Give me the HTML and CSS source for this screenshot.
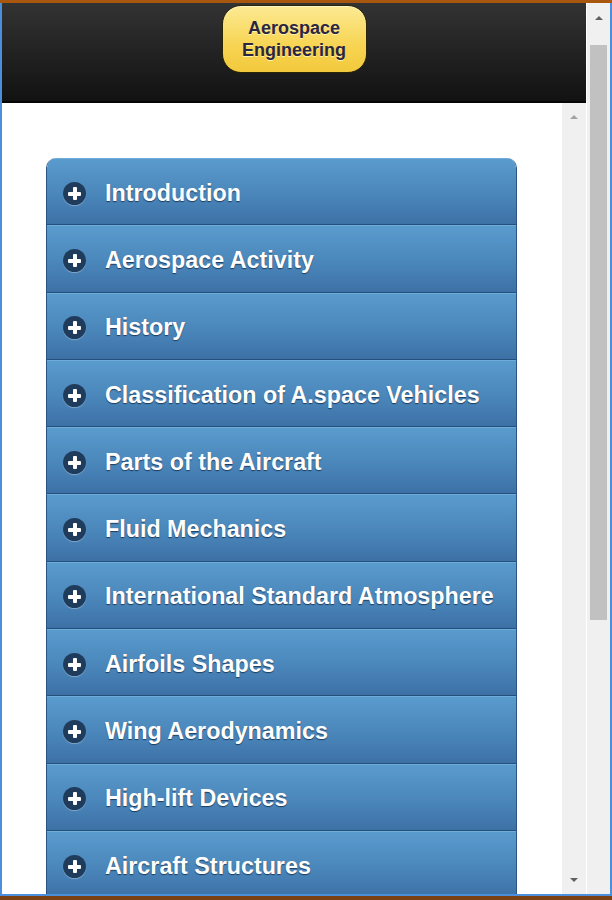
FILE: index.html
```html
<!DOCTYPE html>
<html lang="en">
<head>
    <meta charset="UTF-8">
    <meta name="viewport" content="width=device-width, initial-scale=1.0">
    <title>Aerospace Engineering</title>
    <link rel="stylesheet" href="styles.css">
</head>
<body>
    <div class="window">
        <div class="frame">
            <div class="page">
                <div class="header">
                    <div class="title-button">Aerospace<br>Engineering</div>
                </div>
                <div class="content-row">
                    <div class="content">
                        <ul class="menu">
                            <li class="menu-item"><span class="plus"></span>Introduction</li>
                            <li class="menu-item"><span class="plus"></span>Aerospace Activity</li>
                            <li class="menu-item"><span class="plus"></span>History</li>
                            <li class="menu-item"><span class="plus"></span>Classification of A.space Vehicles</li>
                            <li class="menu-item"><span class="plus"></span>Parts of the Aircraft</li>
                            <li class="menu-item"><span class="plus"></span>Fluid Mechanics</li>
                            <li class="menu-item"><span class="plus"></span>International Standard Atmosphere</li>
                            <li class="menu-item"><span class="plus"></span>Airfoils Shapes</li>
                            <li class="menu-item"><span class="plus"></span>Wing Aerodynamics</li>
                            <li class="menu-item"><span class="plus"></span>High-lift Devices</li>
                            <li class="menu-item"><span class="plus"></span>Aircraft Structures</li>
                        </ul>
                    </div>
                    <div class="scrollbar inner">
                        <span class="arrow up dim"></span>
                        <span class="arrow down"></span>
                    </div>
                </div>
            </div>
            <div class="scrollbar outer">
                <span class="arrow up"></span>
                <div class="thumb"></div>
            </div>
        </div>
    </div>
</body>
</html>
```

FILE: styles.css
```css
body {
    margin: 0;
    padding: 0;
    font-family: "Liberation Sans", Arial, sans-serif;
    background-color: #ffffff;
}

.window {
    width: 612px;
    height: 900px;
    box-sizing: border-box;
    border-top: 3px solid #a9560f;
    border-bottom: 4px solid #7a4214;
    overflow: hidden;
}

.frame {
    height: 100%;
    box-sizing: border-box;
    border-left: 2px solid #4b8fdc;
    border-right: 2px solid #4b8fdc;
    border-bottom: 2px solid #4b8fdc;
    display: flex;
}

.page {
    flex: 1;
    display: flex;
    flex-direction: column;
    min-width: 0;
}

.header {
    height: 100px;
    box-sizing: border-box;
    border-bottom: 2px solid #050505;
    background: linear-gradient(#333333, #121212);
    display: flex;
    justify-content: center;
    align-items: flex-start;
    padding-top: 2px;
}

.title-button {
    width: 145px;
    height: 68px;
    box-sizing: border-box;
    border: 1px solid #2b2406;
    border-radius: 19px;
    background: linear-gradient(#fcea93, #f7d452 60%, #f3c93c);
    box-shadow: inset 0 1px 0 #fff6c8;
    color: #2b2540;
    font-size: 18px;
    font-weight: bold;
    line-height: 22px;
    text-align: center;
    display: flex;
    align-items: center;
    justify-content: center;
    text-shadow: 0 1px 0 #fff3b0;
}

.content-row {
    flex: 1;
    display: flex;
    min-height: 0;
}

.content {
    flex: 1;
    overflow: hidden;
    padding: 55px 0 0 44px;
}

.menu {
    list-style: none;
    margin: 0;
    padding: 0;
    width: 469px;
    border-left: 1px solid #2a5582;
    border-right: 1px solid #2a5582;
    border-radius: 10px 10px 0 0;
    overflow: hidden;
}

.menu-item {
    height: 67.3px;
    box-sizing: border-box;
    display: flex;
    align-items: center;
    padding-left: 16px;
    padding-top: 3px;
    border-top: 1px solid #70acd9;
    border-bottom: 1px solid #24507c;
    background: linear-gradient(#5a9bce, #4a86ba 55%, #3d71a6);
    color: #ffffff;
    font-size: 23.3px;
    font-weight: bold;
    text-shadow: 0 1px 1px #1d3b5c;
}

.plus {
    position: relative;
    width: 23px;
    height: 23px;
    border-radius: 50%;
    background-color: #1f3c5d;
    box-shadow: 0 1px 1px rgba(255, 255, 255, 0.3);
    margin-right: 19px;
    flex-shrink: 0;
}

.plus::before,
.plus::after {
    content: "";
    position: absolute;
    background-color: #ffffff;
    border-radius: 1px;
}

.plus::before {
    left: 5px;
    top: 10px;
    width: 13px;
    height: 4px;
}

.plus::after {
    left: 10px;
    top: 5px;
    width: 4px;
    height: 13px;
}

.scrollbar {
    position: relative;
    background-color: #f0f0f0;
}

.scrollbar.inner {
    width: 24px;
}

.scrollbar.outer {
    width: 23px;
    margin-left: 1px;
}

.arrow {
    position: absolute;
    left: 50%;
    margin-left: -4px;
    width: 0;
    height: 0;
    border-left: 4px solid transparent;
    border-right: 4px solid transparent;
}

.arrow.up {
    top: 12px;
    border-bottom: 4px solid #606060;
}

.scrollbar.outer .arrow.up {
    top: 13px;
}

.arrow.up.dim {
    border-bottom-color: #a3a3a3;
}

.arrow.down {
    bottom: 12px;
    border-top: 4px solid #606060;
}

.thumb {
    position: absolute;
    left: 3px;
    right: 3px;
    top: 42px;
    height: 575px;
    background-color: #c1c1c1;
}
```
